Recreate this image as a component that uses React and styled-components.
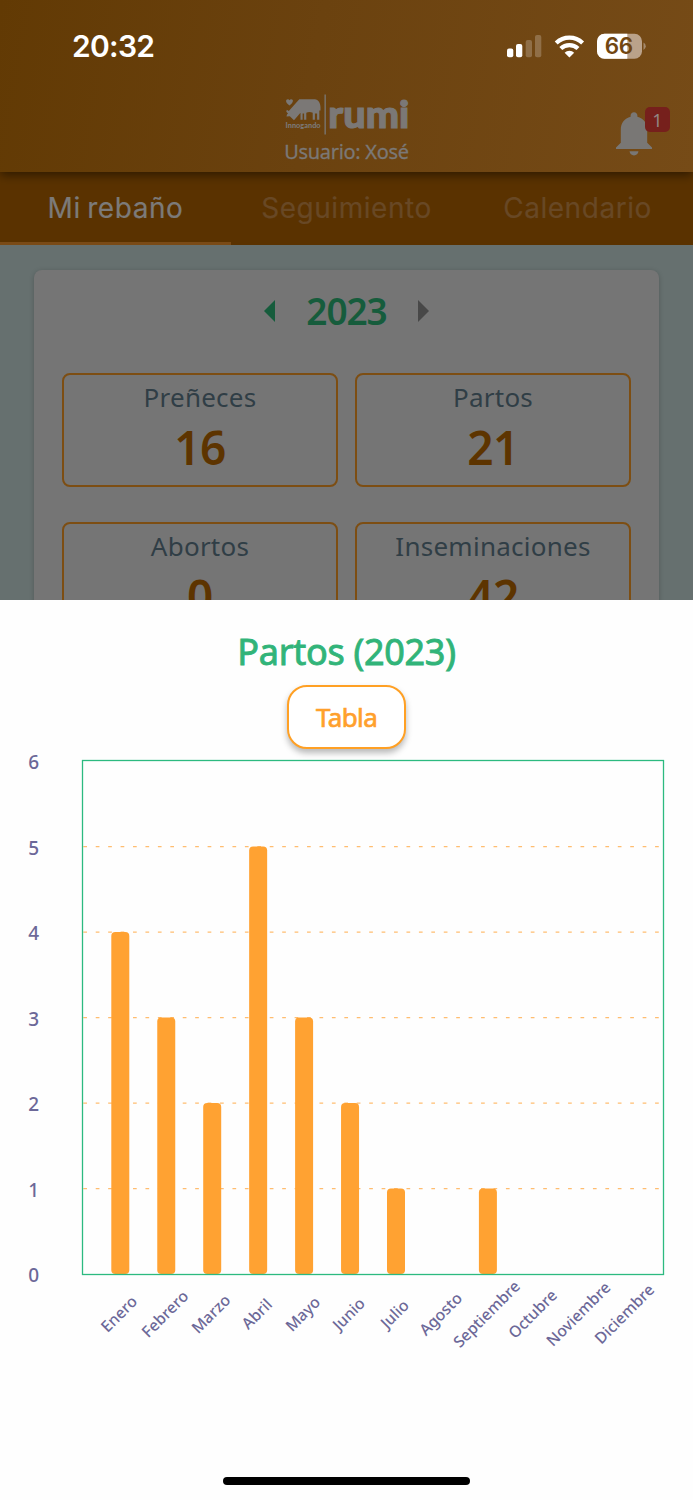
import React from "react";
import styled, { createGlobalStyle } from "styled-components";

const GlobalStyle = createGlobalStyle`
  * {
    box-sizing: border-box;
    margin: 0;
    padding: 0;
  }
  body {
    background: #fefefe;
    font-family: "Noto Sans", sans-serif;
  }
`;

const Screen = styled.div`
  width: 693px;
  height: 1500px;
  overflow: hidden;
  display: flex;
  flex-direction: column;
`;

const Backdrop = styled.div`
  height: 600px;
  overflow: hidden;
  display: flex;
  flex-direction: column;
  background: #66706f;
`;

const Header = styled.header`
  position: relative;
  flex: none;
  height: 172px;
  background: linear-gradient(100deg, #623a04 0%, #6b420f 45%, #764b17 100%);
  box-shadow: 0 3px 10px rgba(0, 0, 0, 0.5);
`;

const StatusBar = styled.div`
  height: 92px;
  padding: 0 46px 0 72px;
  display: flex;
  align-items: center;
  justify-content: space-between;
`;

const Clock = styled.span`
  font-family: Inter, sans-serif;
  font-size: 30px;
  font-weight: 600;
  letter-spacing: -0.7px;
  color: #fff;
`;

const BrandRow = styled.div`
  height: 80px;
  padding: 0 38px;
  display: grid;
  grid-template-columns: 1fr auto 1fr;
`;

const Brand = styled.div`
  grid-column: 2;
  display: flex;
  flex-direction: column;
  align-items: center;
`;

const LogoSvg = styled.svg`
  flex: none;
  overflow: visible;
  fill: #7b7876;
  font-family: Lato, sans-serif;
  font-weight: 900;
`;

const User = styled.p`
  font-size: 20px;
  line-height: 28px;
  margin-top: 2px;
  letter-spacing: -0.3px;
  white-space: nowrap;
  color: #7b7876;
  -webkit-text-stroke: 0.3px #7b7876;
`;

const Bell = styled.div`
  position: relative;
  justify-self: end;
  width: 39px;
  height: 46px;
  margin-top: 20px;
`;

const Badge = styled.span`
  position: absolute;
  top: -5px;
  left: 29px;
  width: 25px;
  height: 25px;
  border-radius: 5px;
  background: #76201c;
  color: #918583;
  font-size: 18px;
  line-height: 26px;
  text-align: center;
`;

const Tabs = styled.nav`
  flex: none;
  height: 73px;
  display: grid;
  grid-template-columns: repeat(3, 1fr);
  background: #5a3200;
`;

const Tab = styled.span`
  height: 73px;
  padding-top: 2px;
  border-bottom: 3px solid ${(props) => (props.$active ? "#7a4b17" : "transparent")};
  color: ${(props) => (props.$active ? "#7c7a79" : "#684825")};
  font-family: Inter, sans-serif;
  font-size: 28px;
  line-height: 68px;
  letter-spacing: 0.55px;
  word-spacing: -2px;
  text-align: center;
  -webkit-text-stroke: 0.2px;
`;

const Card = styled.section`
  flex: none;
  width: 625px;
  height: 500px;
  margin: 25px auto 0;
  padding: 0 28px;
  border-radius: 8px;
  background: #757575;
  box-shadow: 0 1px 5px rgba(0, 0, 0, 0.2);
`;

const YearPicker = styled.div`
  height: 103px;
  padding-bottom: 21px;
  display: flex;
  align-items: center;
  justify-content: center;
  gap: 31px;
`;

const Year = styled.h2`
  font-size: 37px;
  font-weight: 600;
  line-height: 40px;
  letter-spacing: -1.1px;
  color: #165c3c;
`;

const Stats = styled.div`
  display: grid;
  grid-template-columns: 1fr 1fr;
  gap: 35px 17px;
`;

const Stat = styled.div`
  height: 114px;
  border: 2px solid #7d4e13;
  border-radius: 8px;
  text-align: center;
`;

const StatLabel = styled.p`
  margin-top: 4px;
  font-size: 26px;
  line-height: 36px;
  letter-spacing: 0.25px;
  color: #303e46;
`;

const StatValue = styled.p`
  margin-top: 4px;
  font-size: 46px;
  font-weight: 600;
  line-height: 56px;
  letter-spacing: -0.5px;
  color: #5d3400;
`;

const Sheet = styled.main`
  height: 900px;
  background: #fefefe;
  display: flex;
  flex-direction: column;
  align-items: center;
`;

const Title = styled.h1`
  height: 85px;
  padding-top: 28px;
  font-size: 36px;
  font-weight: 400;
  line-height: 48px;
  letter-spacing: -0.3px;
  color: #31b479;
  -webkit-text-stroke: 0.9px #31b479;
`;

const Button = styled.button`
  width: 119px;
  height: 64px;
  border: 2px solid #ffa024;
  border-radius: 20px;
  background: #fff;
  box-shadow: 0 4px 6px rgba(0, 0, 0, 0.28);
  color: #ffa02c;
  font-family: "Noto Sans", sans-serif;
  font-size: 26px;
  letter-spacing: -0.6px;
  -webkit-text-stroke: 0.7px #ffa02c;
`;

const Chart = styled.svg`
  flex: none;
  width: 693px;
  height: 651px;
  font-family: "Noto Sans", sans-serif;
  font-weight: 500;
  fill: #6c6898;
`;

const HomeIndicator = styled.div`
  width: 247px;
  height: 8px;
  margin-top: 77px;
  border-radius: 4px;
  background: #000;
`;

const stats = [
  { label: "Preñeces", value: 16 },
  { label: "Partos", value: 21 },
  { label: "Abortos", value: 0 },
  { label: "Inseminaciones", value: 42 },
];

const months = [
  { name: "Enero", births: 4 },
  { name: "Febrero", births: 3 },
  { name: "Marzo", births: 2 },
  { name: "Abril", births: 5 },
  { name: "Mayo", births: 3 },
  { name: "Junio", births: 2 },
  { name: "Julio", births: 1 },
  { name: "Agosto", births: 0 },
  { name: "Septiembre", births: 1 },
  { name: "Octubre", births: 0 },
  { name: "Noviembre", births: 0 },
  { name: "Diciembre", births: 0 },
];

const STEP = 85.5;
const BASE = 525.5;

const StatusIcons = () => (
  <svg width="140" height="26" viewBox="507 33 140 26">
    <g fill="#fff">
      <rect x="507" y="48.5" width="6.3" height="8.7" rx="2" />
      <rect x="516" y="44" width="6.3" height="13.2" rx="2" />
      <g opacity="0.22">
        <rect x="525.7" y="40" width="6.3" height="17.2" rx="2" />
        <rect x="535" y="35" width="6.3" height="22.2" rx="2" />
      </g>
    </g>
    <g fill="none" stroke="#fff" strokeWidth="4.2">
      <path d="M556.2 43a19 19 0 0 1 26.4 0" />
      <path d="M560.8 48.6a12.4 12.4 0 0 1 17.2 0" />
    </g>
    <path d="M564.6 52.7a7 7 0 0 1 9.6 0l-4.8 4.8z" fill="#fff" />
    <clipPath id="battery">
      <rect x="597" y="33.7" width="45" height="25" rx="7.5" />
    </clipPath>
    <g clipPath="url(#battery)">
      <rect x="597" y="33" width="45" height="26" fill="#baa28a" />
      <rect x="597" y="33" width="30.3" height="26" fill="#fff" />
    </g>
    <path d="M643.5 42.5a4.3 4.3 0 0 1 0 7.6z" fill="#a58a6d" />
    <text
      x="619"
      y="54.3"
      textAnchor="middle"
      fontFamily="Inter, sans-serif"
      fontSize="22.5"
      fontWeight="600"
      textLength="28.5"
      fill="#714611"
    >
      66
    </text>
  </svg>
);

const Logo = () => (
  <LogoSvg width="129" height="44" viewBox="282 92 129 44">
    <path d="M289.5 105.5c-4.600-3.300-3.900-6.400-1.600-6.300.8 0 1.300.4 1.600 1 .4-.6.900-1 1.700-1 2.300 0 2.800 3-1.700 6.300z" />
    <path d="M299.3 99.200h15.500c3.500.3 5.700 4 5.700 8v3.300h-1.200v9.200h-2.200v-6.200h-2.200v6.200h-2.200v-7c-2.200-.8-4.400-.8-6.400 0v7h-2.200v-6.200h-1.500v6.200h-2.100v-7l-6.500 7.500-4.200-4-3.300.2.500-2 1-1-1.700-1.600.5-2 2 1.200z" />
    <text x="285.6" y="127.7" fontSize="7" textLength="35" lengthAdjust="spacingAndGlyphs">
      Innogando
    </text>
    <rect x="324.5" y="94.5" width="1.3" height="40" />
    <text
      x="328.3"
      y="127.6"
      fontSize="37"
      textLength="81"
      lengthAdjust="spacingAndGlyphs"
      stroke="#7b7876"
      strokeWidth="1.1"
    >
      rumi
    </text>
  </LogoSvg>
);

const BellIcon = () => (
  <svg width="36" height="44" viewBox="0 0 36 44" fill="#797775">
    <path d="M18 .2c2 0 3.400 1.500 3.400 3.400v1.100C27.400 6.200 31.200 11 31.200 17.500v13.200l4.800 4.700v1.700H0v-1.700l4.800-4.700V17.500C4.800 11 8.600 6.200 14.600 4.700V3.600C14.600 1.700 16 .2 18 .2z" />
    <path d="M13.500 39.300h9c-.4 2.700-2 4.100-4.500 4.100s-4.100-1.400-4.500-4.100z" />
  </svg>
);

const BirthsChart = () => (
  <Chart viewBox="0 0 693 651">
    {[0, 1, 2, 3, 4, 5, 6].map((n) => (
      <text key={n} x="33.7" y={BASE - n * STEP + 7.5} textAnchor="middle" fontSize="19">
        {n}
      </text>
    ))}
    {[1, 2, 3, 4, 5].map((n) => (
      <line
        key={n}
        x1="83.3"
        x2="660"
        y1={BASE - n * STEP - 0.3}
        y2={BASE - n * STEP - 0.3}
        stroke="#ffbd70"
        strokeWidth="1.3"
        strokeDasharray="3.7 8.73"
      />
    ))}
    {months.map(({ name, births }, i) => (
      <g key={name}>
        {births > 0 && (
          <rect
            x={111.3 + i * 45.95}
            y={BASE - births * STEP - 0.5}
            width="18"
            height={births * STEP}
            rx="4"
            fill="#ffa232"
          />
        )}
        <text
          transform={`translate(${119.6 + i * 45.95} 565.6) rotate(-45)`}
          y="4.7"
          textAnchor="middle"
          fontSize="15.7"
        >
          {name}
        </text>
      </g>
    ))}
    <rect x="82.5" y="11.5" width="581" height="514" fill="none" stroke="#2cba80" strokeWidth="1.3" />
  </Chart>
);

const App = () => {
  return (
    <>
      <GlobalStyle />
      <Screen>
        <Backdrop>
          <Header>
            <StatusBar>
              <Clock>20:32</Clock>
              <StatusIcons />
            </StatusBar>
            <BrandRow>
              <Brand>
                <Logo />
                <User>Usuario: Xosé</User>
              </Brand>
              <Bell>
                <BellIcon />
                <Badge>1</Badge>
              </Bell>
            </BrandRow>
          </Header>
          <Tabs>
            <Tab $active>Mi rebaño</Tab>
            <Tab>Seguimiento</Tab>
            <Tab>Calendario</Tab>
          </Tabs>
          <Card>
            <YearPicker>
              <svg width="11" height="22" viewBox="0 0 11 22">
                <path d="M11 0v22L0 11z" fill="#165c3c" />
              </svg>
              <Year>2023</Year>
              <svg width="11" height="22" viewBox="0 0 11 22">
                <path d="M0 0v22l11-11z" fill="#484848" />
              </svg>
            </YearPicker>
            <Stats>
              {stats.map(({ label, value }) => (
                <Stat key={label}>
                  <StatLabel>{label}</StatLabel>
                  <StatValue>{value}</StatValue>
                </Stat>
              ))}
            </Stats>
          </Card>
        </Backdrop>
        <Sheet>
          <Title>Partos (2023)</Title>
          <Button>Tabla</Button>
          <BirthsChart />
          <HomeIndicator />
        </Sheet>
      </Screen>
    </>
  );
};

export default App;
